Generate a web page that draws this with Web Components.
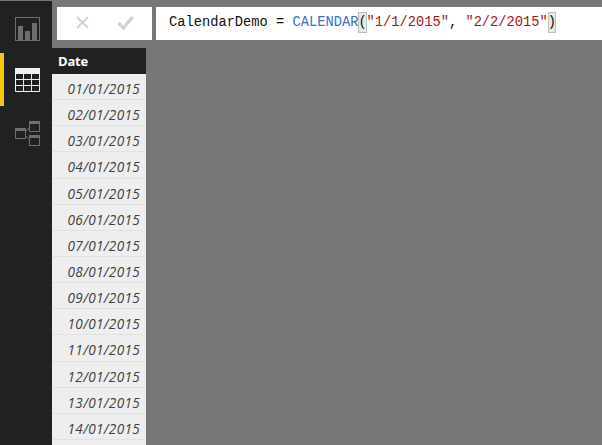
<!DOCTYPE html>
<html>
<head>
<meta charset="utf-8">
<title>Calendar demo</title>
<style>
html, body { margin: 0; height: 100%; background: #777; overflow: hidden; }
.b{ display: inline-block; height: 21px; line-height: 21px; background: #e4ebe4; outline: 1px solid #b9c4b9; outline-offset: -1px; }
</style>
</head>
<body>
<app-shell>
    <nav-rail slot="rail"></nav-rail>
    <formula-bar slot="formula">CalendarDemo = <span style="color:#3b6fc4">CALENDAR</span><span class="b">(</span><span style="color:#a31515">"1/1/2015"</span>, <span style="color:#a31515">"2/2/2015"</span><span class="b">)</span></formula-bar>
    <data-table slot="table" heading="Date"></data-table>
</app-shell>
<script>
class AppShell extends HTMLElement{
    constructor(){
        super();
        this.attachShadow({ mode: 'open' });
        this.shadowRoot.innerHTML = `
        <style>
        :host{
            display: flex;
            height: 445px;
            box-sizing: border-box;
            padding-top: 1px;
            background: #777;
            overflow: hidden;
        }
        #main{
            flex: 1;
            display: flex;
            flex-direction: column;
            min-width: 0;
        }
        </style>
        <slot name="rail"></slot>
        <div id="main">
            <slot name="formula"></slot>
            <slot name="table"></slot>
        </div>
        `
    }
}
customElements.define('app-shell', AppShell);

class NavRail extends HTMLElement{
    constructor(){
        super();
        this.attachShadow({ mode: 'open' });
        this.shadowRoot.innerHTML = `
        <style>
        :host{
            display: flex;
            flex-direction: column;
            width: 52px;
            background: #212121;
            flex: none;
        }
        .item{
            padding-left: 15px;
            box-sizing: border-box;
            display: flex;
            align-items: center;
        }
        .item svg{ display: block; }
        #report{ height: 52px; padding-top: 4px; }
        #data{ height: 53px; border-left: 4px solid #f2c811; padding-left: 11px; }
        #model{ height: 55px; }
        </style>
        <div class="item" id="report">
            <svg width="25" height="24" viewBox="0 0 25 24">
                <rect x=".5" y=".5" width="24" height="23" fill="none" stroke="#6e6e6e"/>
                <rect x="3" y="9" width="5" height="14" fill="#6e6e6e"/>
                <rect x="10" y="14" width="5" height="9" fill="#6e6e6e"/>
                <rect x="17" y="6" width="5" height="17" fill="#6e6e6e"/>
            </svg>
        </div>
        <div class="item" id="data">
            <svg width="25" height="24" viewBox="0 0 25 24">
                <rect width="25" height="6" fill="#f0f0f0"/>
                <path d="M.5 5v18.5h24V5M.5 11.5h24M.5 17.5h24M8.5 5v18M16.5 5v18" fill="none" stroke="#f0f0f0"/>
            </svg>
        </div>
        <div class="item" id="model">
            <svg width="25" height="25" viewBox="0 0 25 25">
                <g fill="none" stroke="#6e6e6e">
                    <rect x=".5" y="7.5" width="10" height="10"/>
                    <rect x="14.5" y=".5" width="10" height="10"/>
                    <rect x="14.5" y="14.5" width="10" height="10"/>
                    <path d="M11 10l3-3M11 15l3 3"/>
                </g>
                <rect y="7" width="11" height="3" fill="#6e6e6e"/>
                <rect x="14" width="11" height="3" fill="#6e6e6e"/>
                <rect x="14" y="14" width="11" height="3" fill="#6e6e6e"/>
            </svg>
        </div>
        `
    }
}
customElements.define('nav-rail', NavRail);

class FormulaBar extends HTMLElement{
    constructor(){
        super();
        this.attachShadow({ mode: 'open' });
        this.shadowRoot.innerHTML = `
        <style>
        :host{
            display: flex;
            gap: 4px;
            padding: 6px 0 8px 5px;
            flex: none;
        }
        #buttons, #input{
            height: 33px;
            background: #fff;
            box-sizing: border-box;
        }
        #buttons{
            width: 95px;
            flex: none;
            display: flex;
            align-items: center;
            padding: 0 0 2px 19px;
            gap: 28px;
        }
        #input{
            flex: 1;
            padding-left: 13px;
            font: 13.72px/31px "Liberation Mono", monospace;
            color: #111;
            white-space: pre;
        }
        svg{ display: block; }
        </style>
        <div id="buttons">
            <svg width="13" height="13" viewBox="0 0 13 13"><path d="M1 1l11 11M12 1L1 12" stroke="#d2d2d2" stroke-width="2" fill="none"/></svg>
            <svg width="17" height="15" viewBox="0 0 17 15"><path d="M1.5 8l5 5L15.5 2" stroke="#d2d2d2" stroke-width="3.4" fill="none"/></svg>
        </div>
        <div id="input"><slot></slot></div>
        `
    }
}
customElements.define('formula-bar', FormulaBar);

class DataTable extends HTMLElement{
    constructor(){
        super();
        this.attachShadow({ mode: 'open' });
        this.shadowRoot.innerHTML = `
        <style>
        :host{
            display: block;
            width: 94px;
            flex: 1;
            min-height: 0;
            overflow: hidden;
        }
        #head{
            height: 26px;
            padding-left: 6px;
            background: #212121;
            color: #fff;
            font: bold 13px/27px "Open Sans", sans-serif;
            letter-spacing: -.2px;
        }
        .row{
            height: 26.15px;
            box-sizing: border-box;
            padding-right: 6px;
            text-align: right;
            background: #eee;
            border-bottom: 1px solid #e2e2e2;
            color: #404040;
            font: italic 13.6px/29px "Open Sans", sans-serif;
            letter-spacing: .3px;
        }
        </style>
        <div id="head"></div>
        <div id="rows"></div>
        `
    }

    connectedCallback(){
        this.shadowRoot.getElementById('head').textContent = this.getAttribute('heading');
        const rows = this.shadowRoot.getElementById('rows');
        for(let d = 1; d <= 15; d++){
            const row = document.createElement('div');
            row.className = 'row';
            if(d < 15) row.textContent = String(d).padStart(2, '0') + '/01/2015';
            rows.appendChild(row);
        }
    }
}
customElements.define('data-table', DataTable);
</script>
</body>
</html>
